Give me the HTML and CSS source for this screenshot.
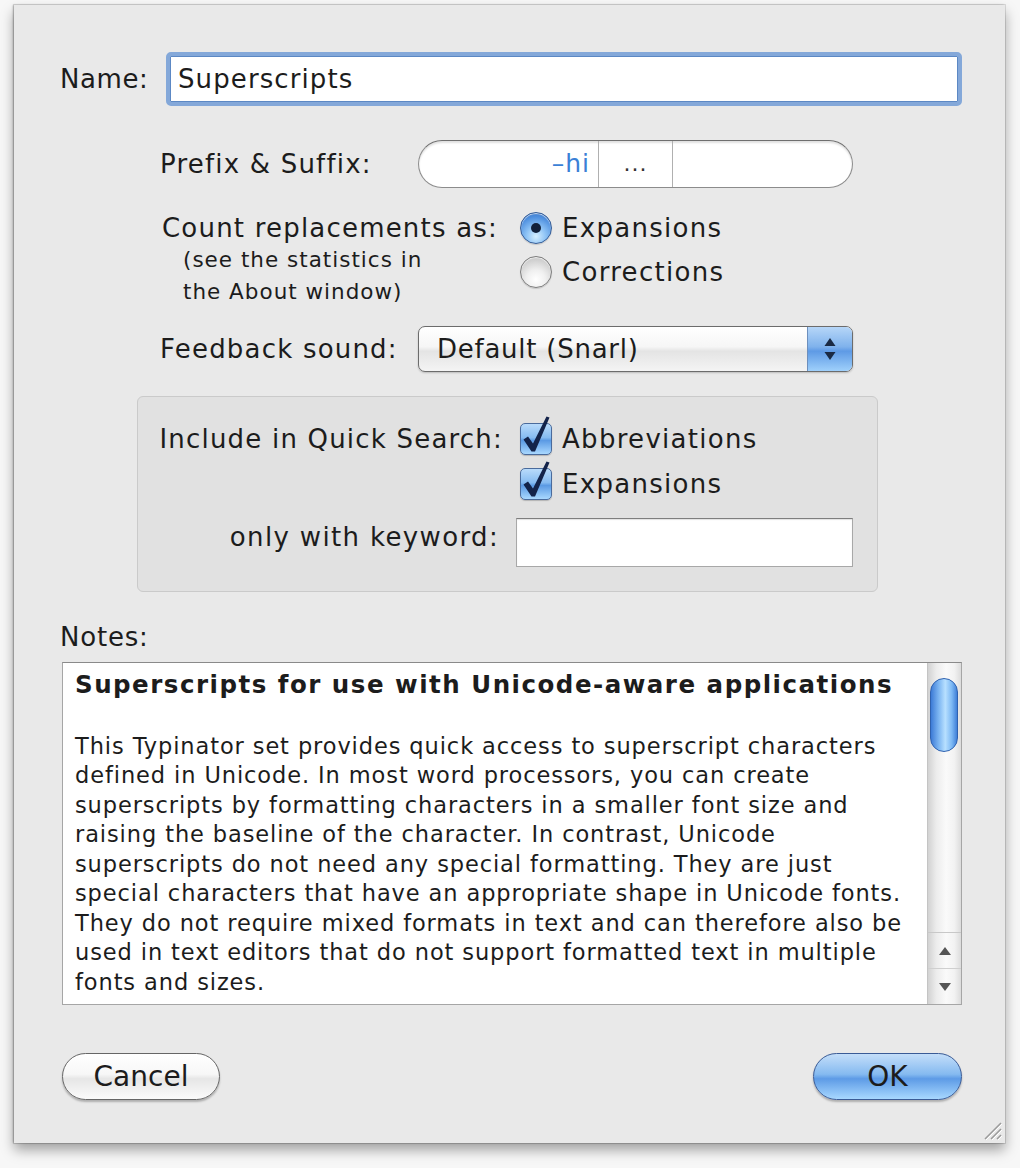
FILE: index.html
```html
<!DOCTYPE html>
<html>
<head>
<meta charset="utf-8">
<link rel="stylesheet" href="styles.css">
</head>
<body>
<div class="window">
  <div class="row row-name">
    <span class="lbl lbl-name">Name:</span>
    <div class="field focus">Superscripts</div>
  </div>

  <div class="row row-prefix">
    <span class="lbl lbl-prefix">Prefix &amp; Suffix:</span>
    <div class="pill">
      <span class="seg seg-a">–hi</span>
      <span class="seg seg-b">...</span>
      <span class="seg seg-c"></span>
    </div>
  </div>

  <div class="row row-count">
    <div class="count-labels">
      <div class="lbl">Count replacements as:</div>
      <div class="note">(see the statistics in<br>the About window)</div>
    </div>
    <div class="radios">
      <div class="opt"><span class="radio on"></span>Expansions</div>
      <div class="opt"><span class="radio"></span>Corrections</div>
    </div>
  </div>

  <div class="row row-feedback">
    <span class="lbl lbl-prefix">Feedback sound:</span>
    <div class="popup">
      <span class="popup-text">Default (Snarl)</span>
      <span class="popup-arrows">
        <svg width="14" height="26" viewBox="0 0 14 26"><path d="M7 2 L12.5 10 H1.5 Z M7 24 L12.5 16 H1.5 Z" fill="#1a2a44"/></svg>
      </span>
    </div>
  </div>

  <div class="group">
    <div class="glbl">Include in Quick Search:</div>
    <div class="opt"><span class="check"><svg width="34" height="40" viewBox="0 -8 34 40"><path d="M3.5 16.5 L8 13.5 L13 20.5 L26.5 -6.5 L29.5 -5.5 L15 28.5 L11.5 28.5 Z" fill="#13234a"/></svg></span>Abbreviations</div>
    <div class="glbl"></div>
    <div class="opt"><span class="check"><svg width="34" height="40" viewBox="0 -8 34 40"><path d="M3.5 16.5 L8 13.5 L13 20.5 L26.5 -6.5 L29.5 -5.5 L15 28.5 L11.5 28.5 Z" fill="#13234a"/></svg></span>Expansions</div>
    <div class="glbl kw">only with keyword:</div>
    <div class="kw-field"></div>
  </div>

  <div class="notes-lbl">Notes:</div>
  <div class="notes">
    <div class="notes-text">
      <div class="notes-head">Superscripts for use with Unicode-aware applications</div>
      <p class="notes-body">This Typinator set provides quick access to superscript characters<br>defined in Unicode. In most word processors, you can create<br>superscripts by formatting characters in a smaller font size and<br>raising the baseline of the character. In contrast, Unicode<br>superscripts do not need any special formatting. They are just<br>special characters that have an appropriate shape in Unicode fonts.<br>They do not require mixed formats in text and can therefore also be<br>used in text editors that do not support formatted text in multiple<br>fonts and sizes.</p>
    </div>
    <div class="scroll">
      <div class="track"><div class="thumb"></div></div>
      <div class="arrow arrow-up"><svg width="14" height="10" viewBox="0 0 14 10"><path d="M7 1 L13 9 H1 Z" fill="#555"/></svg></div>
      <div class="arrow arrow-down"><svg width="14" height="10" viewBox="0 0 14 10"><path d="M7 9 L13 1 H1 Z" fill="#555"/></svg></div>
    </div>
  </div>

  <div class="buttons">
    <div class="btn btn-cancel">Cancel</div>
    <div class="btn btn-ok">OK</div>
  </div>

  <svg class="grip" width="24" height="24" viewBox="0 0 24 24">
    <path d="M22 6 L6 22 M22 12 L12 22 M22 18 L18 22" stroke="#9a9a9a" stroke-width="1.5"/>
    <path d="M23 7 L7 23 M23 13 L13 23 M23 19 L19 23" stroke="#ffffff" stroke-width="1"/>
  </svg>
</div>
</body>
</html>
```

FILE: styles.css
```css
html, body {
  margin: 0;
  padding: 0;
}
body {
  background: #f7f7f7;
  width: 1020px;
  height: 1168px;
  overflow: hidden;
  font-family: "DejaVu Sans", "Liberation Sans", sans-serif;
  color: #1c1c1c;
}
.window {
  position: relative;
  box-sizing: border-box;
  width: 991px;
  height: 1138px;
  margin: 5px 0 0 14px;
  padding-top: 47px;
  background: #e9e9e9;
  box-shadow: 0 7px 12px rgba(0,0,0,0.35), 0 0 0 1px rgba(0,0,0,0.10), -1px 0 2px rgba(0,0,0,0.25);
}
.row {
  display: flex;
  align-items: center;
}
.lbl {
  font-size: 26px;
  line-height: 32px;
  letter-spacing: 1.2px;
  white-space: nowrap;
}
.row-name {
  padding-left: 46px;
  height: 54px;
}
.lbl-name {
  width: 106px;
  letter-spacing: 0.6px;
}
.field.focus {
  box-sizing: border-box;
  width: 796px;
  height: 54px;
  border: 4px solid #84a8d9;
  border-radius: 5px;
  box-shadow: inset 0 0 0 1px #5c88c4;
  background: #fff;
  font-size: 26px;
  letter-spacing: 1.1px;
  line-height: 46px;
  padding-left: 8px;
}
.row-prefix {
  margin-top: 34px;
  padding-left: 146px;
  height: 48px;
}
.lbl-prefix {
  width: 258px;
}
.pill {
  box-sizing: border-box;
  width: 435px;
  height: 48px;
  border: 1.5px solid #8c8c8c;
  border-top-color: #6f6f6f;
  border-radius: 24px;
  background: #fff;
  box-shadow: inset 0 2px 2px rgba(0,0,0,0.12);
  display: flex;
  overflow: hidden;
}
.seg {
  font-size: 25px;
  line-height: 45px;
}
.seg-a {
  width: 179px;
  text-align: right;
  padding-right: 8px;
  box-sizing: border-box;
  color: #3b80d6;
  letter-spacing: 1px;
}
.seg-b {
  width: 73px;
  text-align: center;
  border-left: 1px solid #b0b0b0;
  border-right: 1px solid #b0b0b0;
  color: #333;
  font-size: 22px;
  letter-spacing: 1px;
}
.seg-c {
  flex: 1;
}
.row-count {
  margin-top: 24px;
  padding-left: 148px;
  align-items: flex-start;
}
.count-labels {
  width: 358px;
}
.note {
  font-size: 21.5px;
  line-height: 32px;
  letter-spacing: 1px;
  padding-left: 21px;
}
.radios {
  display: flex;
  flex-direction: column;
  gap: 12px;
}
.opt {
  display: flex;
  align-items: center;
  gap: 10px;
  font-size: 26px;
  line-height: 32px;
  height: 32px;
  letter-spacing: 1.3px;
  white-space: nowrap;
}
.radio {
  box-sizing: border-box;
  flex: none;
  width: 32px;
  height: 32px;
  border-radius: 50%;
  border: 1px solid #7d7d7d;
  background: radial-gradient(circle at 50% 75%, #ffffff 0%, #f0f0f0 35%, #d2d2d2 70%, #bdbdbd 100%);
  box-shadow: inset 0 1px 1px rgba(255,255,255,0.8), 0 1px 1px rgba(0,0,0,0.15);
  position: relative;
}
.radio.on {
  border-color: #355d97;
  background: radial-gradient(circle at 50% 78%, #d6efff 0%, #8ec3f5 35%, #4f90df 70%, #2f66b6 100%);
}
.radio.on::after {
  content: "";
  position: absolute;
  left: 50%;
  top: 50%;
  width: 10px;
  height: 10px;
  margin: -5px 0 0 -5px;
  border-radius: 50%;
  background: #12203a;
}
.row-feedback {
  margin-top: 18px;
  padding-left: 146px;
  height: 46px;
}
.popup {
  box-sizing: border-box;
  width: 435px;
  height: 46px;
  border: 1px solid #6c6c6c;
  border-radius: 7px;
  background: linear-gradient(#ffffff 0%, #f6f6f6 45%, #e4e4e4 55%, #f4f4f4 100%);
  box-shadow: 0 1px 2px rgba(0,0,0,0.2);
  display: flex;
  overflow: hidden;
}
.popup-text {
  flex: 1;
  font-size: 26px;
  line-height: 44px;
  letter-spacing: 0.75px;
  padding-left: 18px;
}
.popup-arrows {
  width: 44px;
  display: flex;
  align-items: center;
  justify-content: center;
  background: linear-gradient(#b6d6f8 0%, #7fb2ec 45%, #5e9ae5 55%, #9fd0fb 100%);
  border-left: 1px solid #6d8fbd;
}
.group {
  box-sizing: border-box;
  width: 741px;
  height: 196px;
  margin: 24px 0 0 123px;
  padding-top: 26px;
  background: #e1e1e1;
  border: 1px solid #cacaca;
  border-radius: 6px;
  display: grid;
  grid-template-columns: 365px auto;
  column-gap: 17px;
  grid-template-rows: 32px 32px 49px;
  row-gap: 13px;
}
.group .opt {
  align-self: center;
}
.glbl {
  font-size: 26px;
  line-height: 32px;
  letter-spacing: 1.2px;
  text-align: right;
  white-space: nowrap;
}
.glbl.kw {
  line-height: 49px;
  padding-right: 4px;
  letter-spacing: 1.35px;
}
.check {
  box-sizing: border-box;
  flex: none;
  width: 32px;
  height: 32px;
  border: 1px solid #4a6b9c;
  border-radius: 5px;
  background: linear-gradient(#b9dbfb 0%, #86bbf1 45%, #5b9ae4 55%, #a9d8ff 100%);
  box-shadow: 0 1px 1px rgba(0,0,0,0.2);
  position: relative;
}
.check svg {
  position: absolute;
  left: -1px;
  top: -9px;
}
.kw-field {
  margin-top: 5px;
  margin-left: -4px;
  box-sizing: border-box;
  width: 337px;
  height: 49px;
  background: #fff;
  border: 1px solid #a8a8a8;
  border-top-color: #7e7e7e;
  box-shadow: inset 0 1px 1px rgba(0,0,0,0.12);
}
.notes-lbl {
  margin-top: 29px;
  padding-left: 46px;
  font-size: 26px;
  line-height: 32px;
  letter-spacing: 0.8px;
}
.notes {
  box-sizing: border-box;
  width: 900px;
  height: 343px;
  margin: 9px 0 0 48px;
  background: #fff;
  border: 1px solid #a6a6a6;
  border-top-color: #8a8a8a;
  display: flex;
}
.notes-text {
  flex: 1;
  padding: 7px 0 0 12px;
  overflow: hidden;
}
.notes-head {
  font-weight: bold;
  font-size: 24.5px;
  line-height: 29.5px;
  letter-spacing: 1.5px;
  white-space: nowrap;
}
.notes-body {
  margin: 32px 0 0 0;
  font-size: 22.5px;
  line-height: 29.5px;
  letter-spacing: 0.9px;
  white-space: nowrap;
}
.scroll {
  width: 33px;
  flex: none;
  display: flex;
  flex-direction: column;
  border-left: 1px solid #c4c4c4;
  background: linear-gradient(90deg, #d2d2d2 0%, #ececec 25%, #fafafa 55%, #f2f2f2 80%, #dcdcdc 100%);
}
.track {
  height: 270px;
  padding-top: 15px;
  box-sizing: border-box;
  border-bottom: 1px solid #c8c8c8;
}
.thumb {
  margin-left: 2px;
  width: 28px;
  height: 74px;
  box-sizing: border-box;
  border-radius: 14px;
  border: 1px solid #2f62b0;
  background: linear-gradient(90deg, #3d7bd6 0%, #7db6f2 30%, #b8e0ff 55%, #7cb8f4 80%, #3f7fd8 100%);
}
.arrow {
  height: 35px;
  display: flex;
  align-items: center;
  justify-content: center;
}
.arrow-up {
  border-bottom: 1px solid #cfcfcf;
}
.buttons {
  margin-top: 48px;
  padding: 0 43px 0 48px;
  display: flex;
  justify-content: space-between;
}
.btn {
  box-sizing: border-box;
  height: 47px;
  border-radius: 24px;
  font-size: 28px;
  line-height: 45px;
  text-align: center;
  box-shadow: 0 2px 2px rgba(0,0,0,0.25);
}
.btn-cancel {
  width: 158px;
  border: 1px solid #666;
  background: linear-gradient(#ffffff 0%, #f7f7f7 45%, #e6e6e6 55%, #fbfbfb 100%);
}
.btn-ok {
  width: 149px;
  border: 1px solid #3a5b96;
  background: linear-gradient(#c4def9 0%, #85baf0 45%, #5d9be6 55%, #a8d8ff 100%);
}
.grip {
  position: absolute;
  right: 2px;
  bottom: 2px;
}
```
